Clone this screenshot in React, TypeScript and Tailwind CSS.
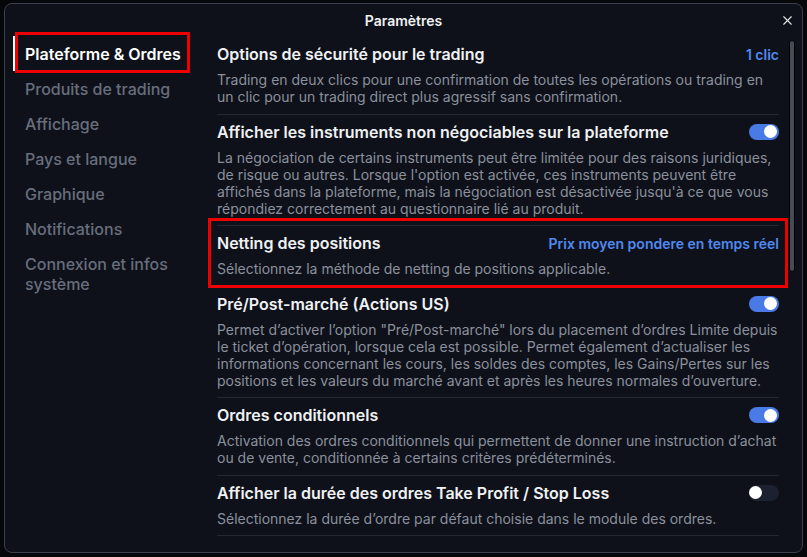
import { X } from 'lucide-react';

interface Setting {
  title: string;
  description: string;
  kind: 'toggle' | 'link';
  on?: boolean;
  value?: string;
  highlighted?: boolean;
}

const menu = [
  'Plateforme & Ordres',
  'Produits de trading',
  'Affichage',
  'Pays et langue',
  'Graphique',
  'Notifications',
  'Connexion et infos système',
];

const settings: Setting[] = [
  {
    title: 'Options de sécurité pour le trading',
    description:
      'Trading en deux clics pour une confirmation de toutes les opérations ou trading en un clic pour un trading direct plus agressif sans confirmation.',
    kind: 'link',
    value: '1 clic',
  },
  {
    title: 'Afficher les instruments non négociables sur la plateforme',
    description:
      "La négociation de certains instruments peut être limitée pour des raisons juridiques, de risque ou autres. Lorsque l'option est activée, ces instruments peuvent être affichés dans la plateforme, mais la négociation est désactivée jusqu'à ce que vous répondiez correctement au questionnaire lié au produit.",
    kind: 'toggle',
    on: true,
  },
  {
    title: 'Netting des positions',
    description: 'Sélectionnez la méthode de netting de positions applicable.',
    kind: 'link',
    value: 'Prix moyen pondere en temps réel',
    highlighted: true,
  },
  {
    title: 'Pré/Post-marché (Actions US)',
    description:
      'Permet d’activer l’option "Pré/Post-marché" lors du placement d’ordres Limite depuis le ticket d’opération, lorsque cela est possible. Permet également d’actualiser les informations concernant les cours, les soldes des comptes, les Gains/Pertes sur les positions et les valeurs du marché avant et après les heures normales d’ouverture.',
    kind: 'toggle',
    on: true,
  },
  {
    title: 'Ordres conditionnels',
    description:
      'Activation des ordres conditionnels qui permettent de donner une instruction d’achat ou de vente, conditionnée à certains critères prédéterminés.',
    kind: 'toggle',
    on: true,
  },
  {
    title: 'Afficher la durée des ordres Take Profit / Stop Loss',
    description: 'Sélectionnez la durée d’ordre par défaut choisie dans le module des ordres.',
    kind: 'toggle',
    on: false,
  },
];

function Toggle({ on }: { on: boolean }) {
  return (
    <div
      className={`w-[30px] h-[16px] rounded-full flex items-center px-[2px] ${
        on ? 'bg-[#4a7ae6] justify-end' : 'bg-[#1c2130] justify-start'
      }`}
    >
      <div className={`w-[13px] h-[13px] rounded-full bg-white ${on ? '' : '-ml-[2px]'}`} />
    </div>
  );
}

export default function App() {
  return (
    <div
      className="w-[807px] h-[557px] bg-[#05070b] overflow-hidden pt-[3px] pl-[4px]"
      style={{ fontFamily: 'Inter, "Noto Sans", sans-serif' }}
    >
      <div className="w-[799px] h-[550px] rounded-[8px] border border-[#3a404c] bg-[#0e111a] flex flex-col overflow-hidden">
        {/* header */}
        <div className="h-[32px] shrink-0 flex items-center justify-center relative">
          <span className="text-[14px] font-semibold text-[#f0f1f3]">Paramètres</span>
          <X className="absolute right-[7px] top-[9px] text-[#e5e7eb]" size={15} strokeWidth={1.8} />
        </div>

        <div className="flex flex-1 min-h-0">
          {/* sidebar */}
          <nav className="w-[203px] shrink-0">
            {menu.map((item, i) => (
              <div
                key={item}
                className={`relative ml-[8px] border-l-[3px] pl-[9px] pr-4 py-[7.5px] text-[16px] leading-5 ${
                  i === 0
                    ? 'border-white text-white font-semibold'
                    : 'border-transparent text-[#686e7c] font-medium'
                }`}
              >
                {item}
                {i === 0 && (
                  <span className="absolute -left-[1px] -top-[4px] -bottom-[2px] w-[175px] border-[3px] border-[#ee0000]" />
                )}
              </div>
            ))}
          </nav>

          {/* content */}
          <div className="flex-1 px-[9px] pt-[1px]">
            {settings.map((s) => (
              <section key={s.title} className="relative pt-[7px] pb-[8.5px] border-b border-[#232835]">
                <div className="h-5 flex items-center justify-between">
                  <h3 className="text-[16px] font-semibold text-[#f0f1f3]">{s.title}</h3>
                  {s.kind === 'toggle' ? (
                    <Toggle on={!!s.on} />
                  ) : (
                    <span className="text-[14px] font-semibold text-[#5089f0]">{s.value}</span>
                  )}
                </div>
                <p className="mt-[7px] text-[14px] leading-[17px] text-[#8b909c]">{s.description}</p>
                {s.highlighted && (
                  <span className="absolute -left-[9px] -right-[9px] -top-[8px] -bottom-[2px] border-[3px] border-[#ee0000]" />
                )}
              </section>
            ))}
          </div>

          {/* scrollbar */}
          <div className="w-[14px] shrink-0 pt-[4px] pl-[1px]">
            <div className="w-[6px] h-[232px] rounded-full bg-[#454b57] border border-black" />
          </div>
        </div>
      </div>
    </div>
  );
}
